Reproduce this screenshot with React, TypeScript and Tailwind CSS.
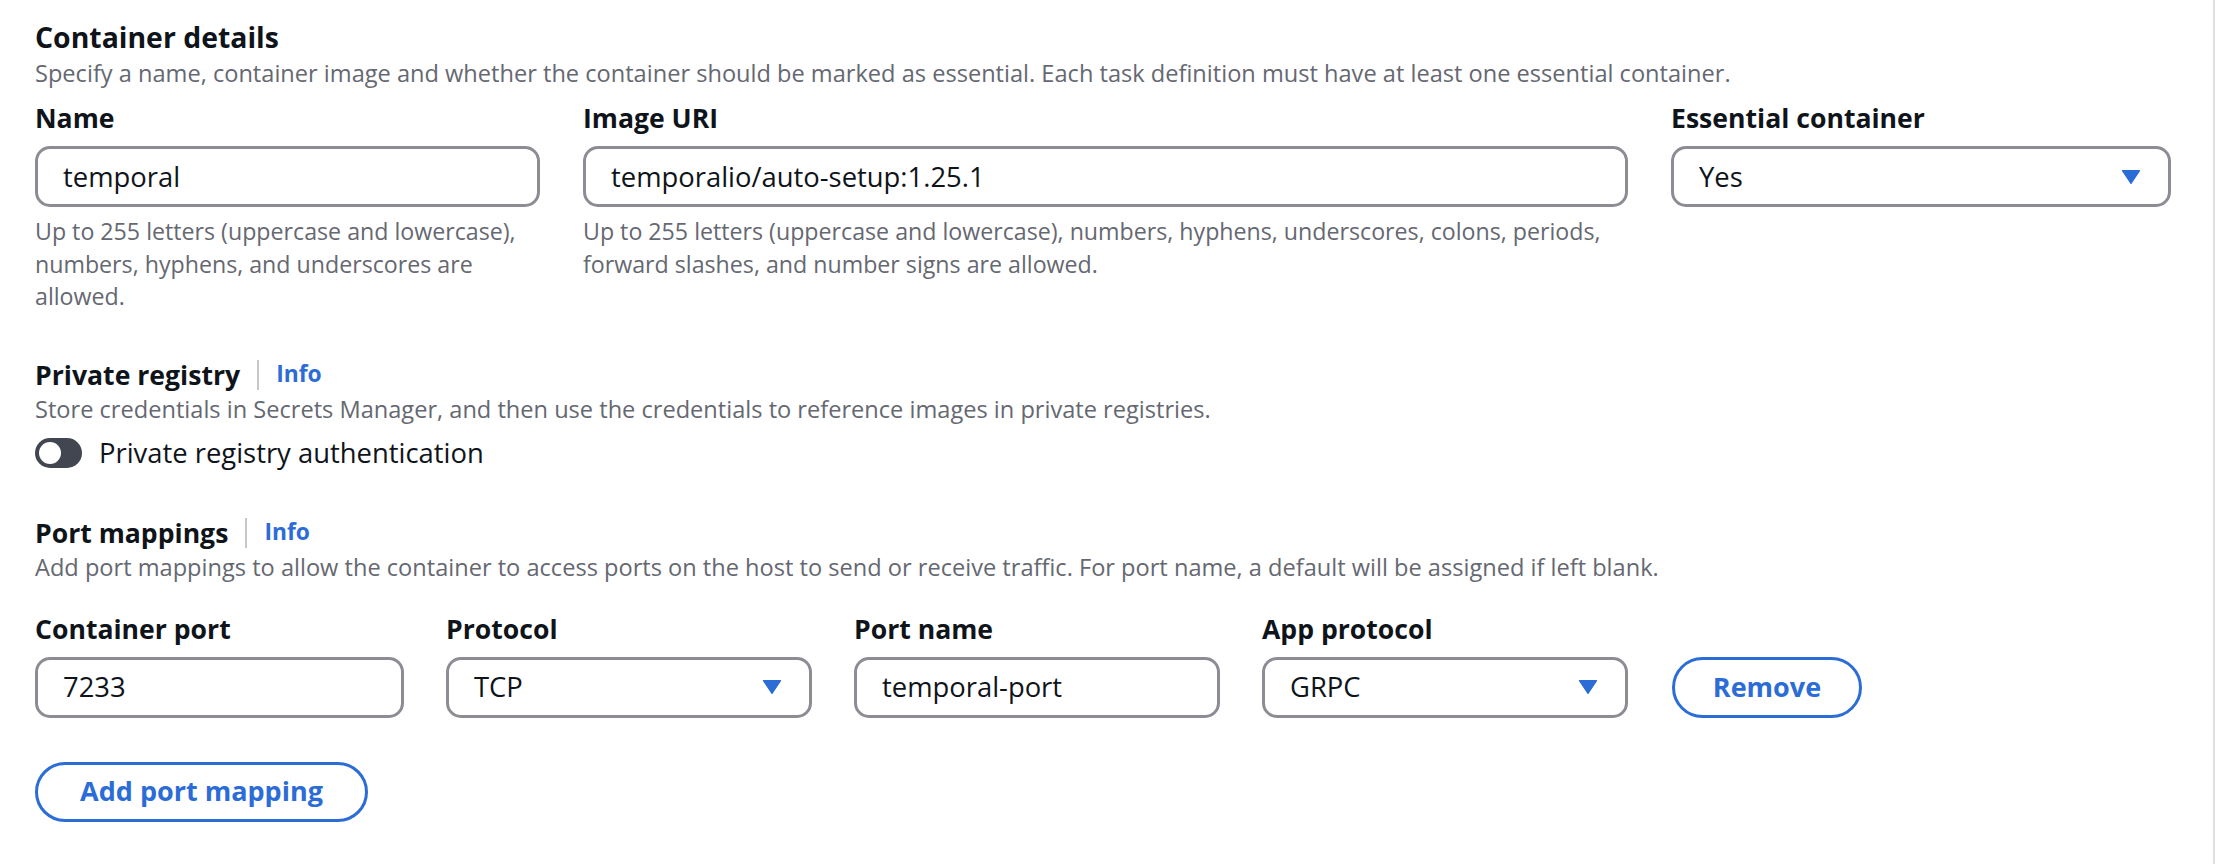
import React from "react";

const INPUT =
  "h-[61px] w-full rounded-[15px] border-[3px] border-[#8c8c94] bg-white pl-[25px] pr-[20px] flex items-center text-[27.4px] text-[#0f141a]";

function Caret() {
  return (
    <svg width="34" height="34" viewBox="0 0 16 16" className="shrink-0">
      <path d="M4 5h8l-4 6-4-6z" fill="#2b6cd7" stroke="#2b6cd7" strokeWidth="0.6" strokeLinejoin="round" />
    </svg>
  );
}

function Label({ children }: { children: React.ReactNode }) {
  return <div className="text-[26.6px] leading-[34px] font-bold text-[#0f141a]">{children}</div>;
}

function TextField({ label, value }: { label: string; value: string }) {
  return (
    <div className="flex flex-col">
      <Label>{label}</Label>
      <div className="mt-[11px]">
        <div className={INPUT}>{value}</div>
      </div>
    </div>
  );
}

function SelectField({ label, value }: { label: string; value: string }) {
  return (
    <div className="flex flex-col">
      <Label>{label}</Label>
      <div className="mt-[11px]">
        <div className={INPUT + " justify-between pr-[20px]"}>
          <span>{value}</span>
          <Caret />
        </div>
      </div>
    </div>
  );
}

function Helper({ children }: { children: React.ReactNode }) {
  return <p className="mt-[8px] text-[23.2px] leading-[32.5px] text-[#656871]">{children}</p>;
}

function SectionHeader({
  title,
  info,
  desc,
  big,
}: {
  title: string;
  info?: boolean;
  desc: string;
  big?: boolean;
}) {
  return (
    <div>
      <div className={"flex items-center " + (big ? "h-[37px]" : "h-[34px]")}>
        <h3
          className={
            "font-bold text-[#0f141a] " + (big ? "text-[28.4px] leading-[37px]" : "text-[26.6px] leading-[34px]")
          }
        >
          {title}
        </h3>
        {info && (
          <>
            <span className="mx-[17px] h-[30px] w-[2px] bg-[#c6c6cd]" />
            <a className="text-[22.8px] font-bold text-[#2b6cd7]">Info</a>
          </>
        )}
      </div>
      <p className="text-[23.6px] leading-[34px] text-[#656871]">{desc}</p>
    </div>
  );
}

function OutlineButton({ children, className }: { children: React.ReactNode; className?: string }) {
  return (
    <button
      type="button"
      className={
        "rounded-full border-[3px] border-[#2b6cd7] bg-white text-[27px] font-bold text-[#2b6cd7] flex items-center justify-center " +
        (className ?? "")
      }
    >
      {children}
    </button>
  );
}

export default function App() {
  return (
    <div className="h-[864px] w-[2215px] border-r-2 border-[#dedee3] bg-white font-['Open_Sans',sans-serif] pl-[35px] pt-[19px]">
      <SectionHeader
        big
        title="Container details"
        desc="Specify a name, container image and whether the container should be marked as essential. Each task definition must have at least one essential container."
      />

      <div className="mt-[11px] grid grid-cols-[505px_1045px_500px] gap-x-[43px]">
        <div>
          <TextField label="Name" value="temporal" />
          <Helper>Up to 255 letters (uppercase and lowercase), numbers, hyphens, and underscores are allowed.</Helper>
        </div>
        <div>
          <TextField label="Image URI" value="temporalio/auto-setup:1.25.1" />
          <Helper>
            Up to 255 letters (uppercase and lowercase), numbers, hyphens, underscores, colons, periods, forward
            slashes, and number signs are allowed.
          </Helper>
        </div>
        <SelectField label="Essential container" value="Yes" />
      </div>

      <div className="mt-[45px]">
        <SectionHeader
          title="Private registry"
          info
          desc="Store credentials in Secrets Manager, and then use the credentials to reference images in private registries."
        />
        <div className="mt-[10px] flex h-[34px] items-center gap-[17px]">
          <span className="flex h-[30px] w-[47px] items-center rounded-full bg-[#424650] pl-[4px]">
            <span className="h-[22px] w-[22px] rounded-full bg-white" />
          </span>
          <span className="text-[27.4px] text-[#0f141a]">Private registry authentication</span>
        </div>
      </div>

      <div className="mt-[46px]">
        <SectionHeader
          title="Port mappings"
          info
          desc="Add port mappings to allow the container to access ports on the host to send or receive traffic. For port name, a default will be assigned if left blank."
        />
        <div className="mt-[28px] flex items-end gap-x-[42px]">
          <div className="w-[369px]">
            <TextField label="Container port" value="7233" />
          </div>
          <div className="w-[366px]">
            <SelectField label="Protocol" value="TCP" />
          </div>
          <div className="w-[366px]">
            <TextField label="Port name" value="temporal-port" />
          </div>
          <div className="w-[366px]">
            <SelectField label="App protocol" value="GRPC" />
          </div>
          <OutlineButton className="ml-[2px] h-[61px] w-[190px]">Remove</OutlineButton>
        </div>
        <OutlineButton className="mt-[44px] h-[60px] w-[333px]">Add port mapping</OutlineButton>
      </div>
    </div>
  );
}
